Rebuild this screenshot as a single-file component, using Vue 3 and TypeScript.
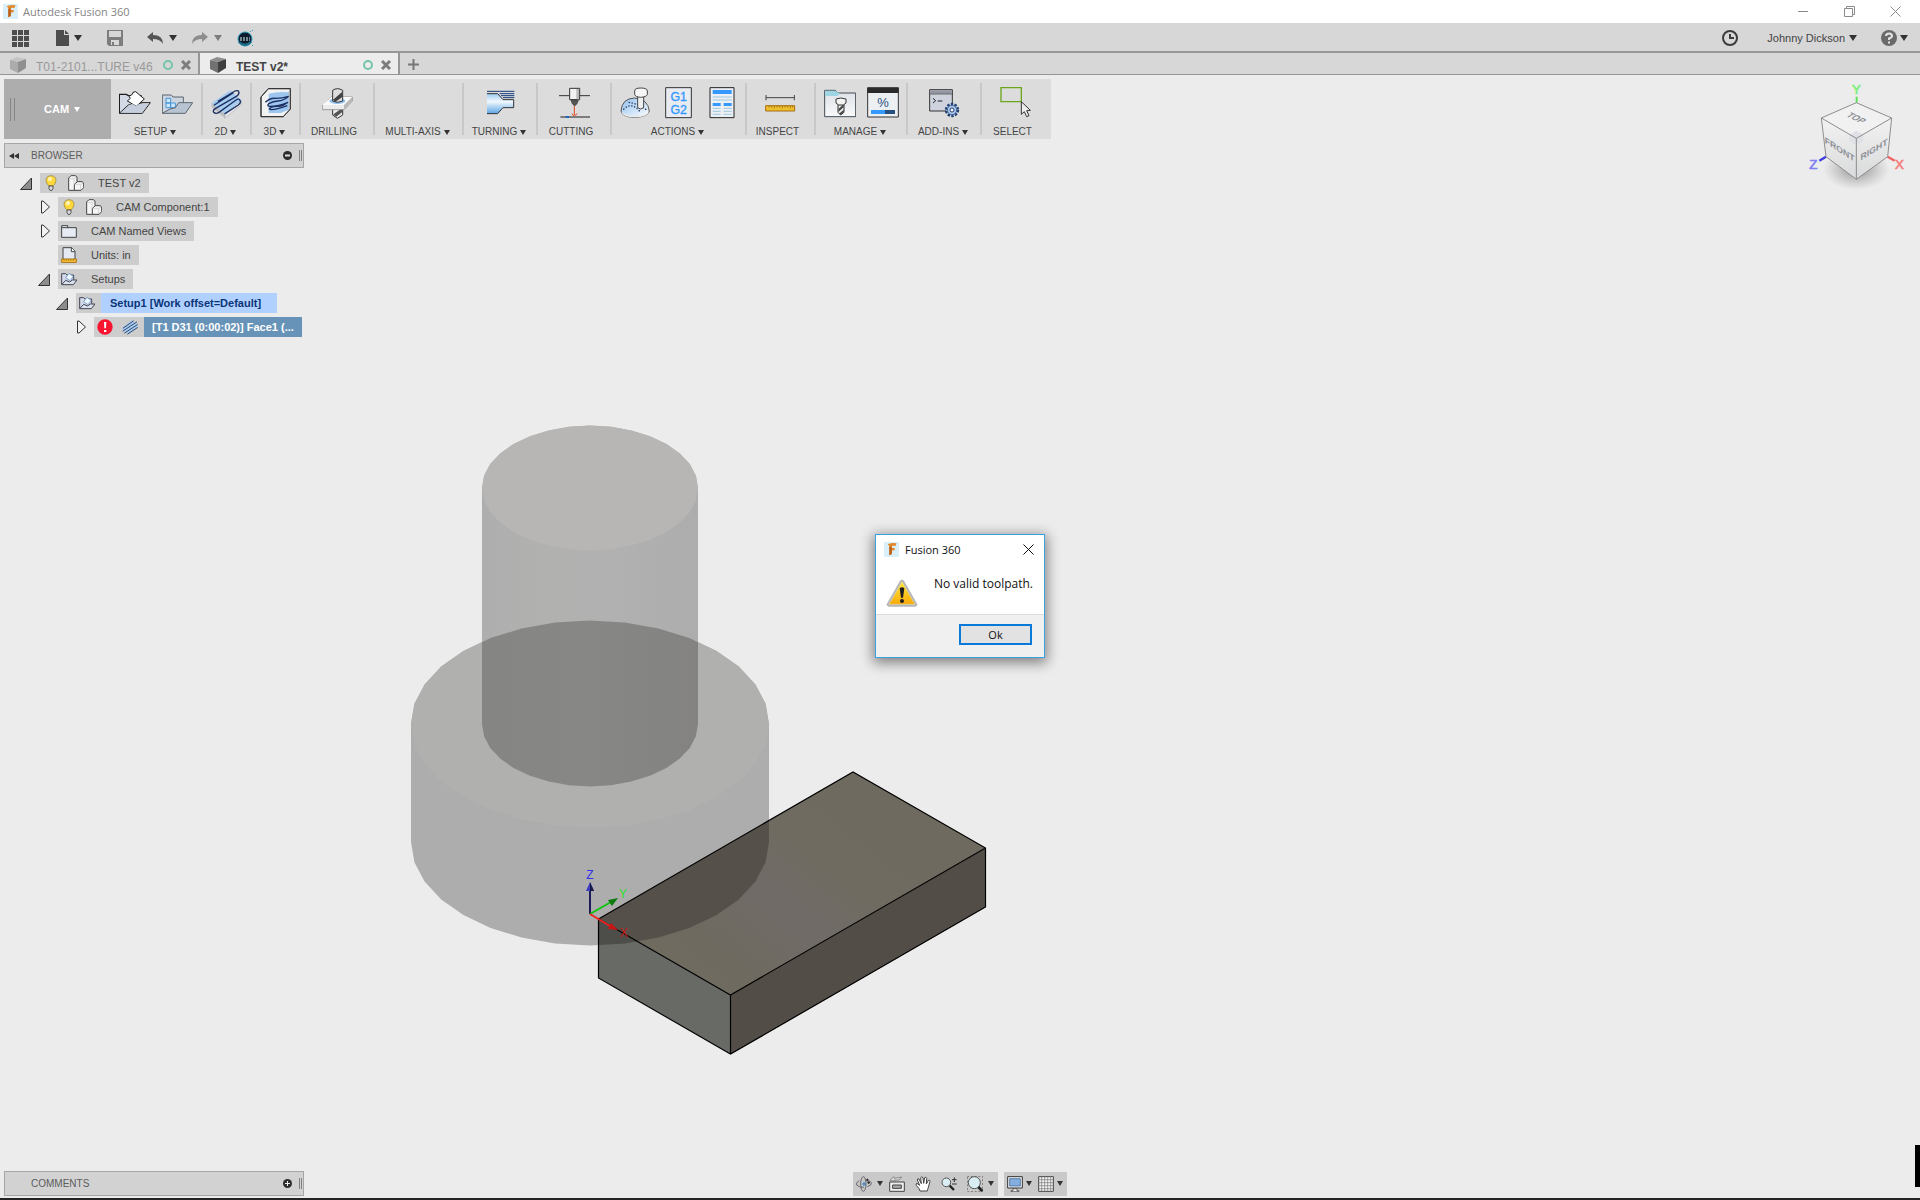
<script setup lang="ts">
interface RibbonGroup {
  label: string
  width: number
  menu: boolean
  icons: string[]
}

interface TreeRow {
  label: string
  level: number
  toggle: 'open' | 'closed' | 'none'
  icons: string[]
  state?: 'active' | 'selected'
}

/* Ribbon glyphs, drawn on a 96 x 96 grid */
const ribbonIcons: Record<string, string> = {
  setup: `<defs><linearGradient id="flap" x1="0" y1="0" x2="1" y2="0"><stop offset="0" stop-color="#9fabc2"/><stop offset="1" stop-color="#e9eef5"/></linearGradient></defs>
    <path d="M1 78V22H22L28 26H66V50" fill="#d3dae6" stroke="#1c1c1c" stroke-width="4"/>
    <path d="M1 79H70L94 47H72L28 54Z" fill="url(#flap)" stroke="#1c1c1c" stroke-width="3" stroke-linejoin="round"/>
    <path d="M25 42L34 34L30 28L40 22L42 16L50 14L76 36L52 58Z" fill="#fff" stroke="#1c1c1c" stroke-width="3" stroke-linejoin="round"/>
    <path d="M4 77L30 55L40 50L52 58L60 51H88L69 77Z" fill="#c6cede"/>`,
  newFolder: `<path d="M1 78V24H28L33 30H64V50" fill="#ccd4df" stroke="#5c6670" stroke-width="3"/>
    <path d="M12 34H26V48H12ZM12 48H26V62H12ZM26 48H40V62H26Z" fill="#cfe6f8" stroke="#4596d8" stroke-width="3"/>
    <path d="M1 79H70L92 47H50L40 62L24 66Z" fill="#b9c4d2" stroke="#5c6670" stroke-width="3" stroke-linejoin="round"/>`,
  mill2d: `<path d="M2 48L42 80L92 40V52L42 94L2 60Z" fill="#b9bcc1"/>
    <path d="M42 80L92 40V52L42 94Z" fill="#e3e5e8" stroke="#9b9ea3" stroke-width="1"/>
    <path d="M2 48L58 10L92 40L42 80Z" fill="#a6ccf0"/>
    <path d="M22 42L72 12Q82 8 84 16Q84 24 76 28L14 64Q4 70 8 76Q14 82 24 76L74 40Q84 32 88 42Q90 48 82 54L42 80M10 54L66 18" fill="none" stroke="#1c2f63" stroke-width="4" stroke-linecap="round"/>`,
  mill3d: `<path d="M3 30L25 5H91V66L70 89H3Z" fill="#f2f2f2" stroke="#333" stroke-width="3" stroke-linejoin="round"/>
    <path d="M70 89L91 66V5L84 16V70Z" fill="#c4c6c9"/>
    <path d="M26 20Q56 12 86 16V68L62 78H26Z" fill="#9cc6ee"/>
    <path d="M16 46Q30 32 48 34Q66 34 86 28Q70 42 54 42Q40 42 26 50Q20 56 28 58Q56 58 84 46Q66 60 50 58Q30 60 28 66Q36 72 82 56" fill="none" stroke="#1c2f63" stroke-width="4"/>
    <path d="M3 30L25 5H91V66L70 89H3Z" fill="none" stroke="#333" stroke-width="3" stroke-linejoin="round"/>`,
  drilling: `<path d="M32 62V84L46 94L62 84V62Z" fill="#eee" stroke="#333" stroke-width="3"/>
    <path d="M34 82L60 64V76L42 90Z" fill="#555"/>
    <path d="M1 56L28 30H91V42L66 68H1Z" fill="#ececec" stroke="#777" stroke-width="2"/>
    <path d="M1 54L28 30H91L66 54Z" fill="#fafafa"/>
    <path d="M66 54L91 30V42L66 68Z" fill="#b9b9b9"/>
    <ellipse cx="46" cy="42" rx="24" ry="9" fill="#8fc0ee"/>
    <path d="M32 42V10Q46 0 62 10V42Q46 50 32 42Z" fill="#ddd" stroke="#333" stroke-width="3"/>
    <path d="M33 38L61 14V30L40 45Z" fill="#444"/>`,
  turning: `<defs><linearGradient id="turn" x1="0" y1="0" x2="0" y2="1"><stop offset="0" stop-color="#9ccaf2"/><stop offset=".4" stop-color="#f1f8fe"/><stop offset="1" stop-color="#5ba4e4"/></linearGradient></defs>
    <path d="M6 20H38L54 38H86V62H54L38 80H6Z" fill="url(#turn)"/>
    <path d="M6 20H38L54 38H86V62H54L38 80H6" fill="none" stroke="#333" stroke-width="3"/>
    <path d="M6 13H88M44 20H88M48 26H88M54 32H88" stroke="#123a78" stroke-width="3"/>`,
  cutting: `<path d="M0 26H93" stroke="#333" stroke-width="3"/>
    <path d="M32 4H62V38H32Z" fill="#f3f3f3" stroke="#333" stroke-width="3"/><path d="M52 6H60V37H52Z" fill="#bbb"/>
    <path d="M36 39H58L54 50L47 57L40 50Z" fill="#555" stroke="#333" stroke-width="2"/>
    <path d="M46 57V84M38 80L46 87L55 80" fill="none" stroke="#e0441c" stroke-width="3"/>
    <path d="M4 90H93" stroke="#7c7c7c" stroke-width="6"/><path d="M20 90H30" stroke="#1d66b8" stroke-width="6"/>`,
  simulate: `<defs><linearGradient id="dome" x1="0" y1="0" x2="1" y2="1"><stop offset="0" stop-color="#8fc0ee"/><stop offset="1" stop-color="#fff"/></linearGradient></defs>
    <path d="M3 72Q6 34 44 33Q84 36 88 72Q84 90 44 91Q6 90 3 72Z" fill="url(#dome)" stroke="#555" stroke-width="3"/>
    <path d="M4 74Q20 86 46 86Q72 86 87 74Q82 91 45 91Q8 91 4 74Z" fill="#e9eaec"/>
    <path d="M10 68Q34 42 60 74M26 46Q54 50 82 70" fill="none" stroke="#1d2c55" stroke-width="4" stroke-dasharray="4 5"/>
    <path d="M53 22V62Q62 70 71 62V22Z" fill="#eee" stroke="#444" stroke-width="3"/>
    <path d="M44 12Q44 3 62 3Q82 3 82 12V22Q80 30 62 31Q46 30 44 22Z" fill="#f6f6f6" stroke="#444" stroke-width="3"/>`,
  post: `<path d="M8 2H85V92H8Z" fill="#e8ebf0" stroke="#333" stroke-width="3"/>
    <text x="47" y="42" text-anchor="middle" font-size="37" fill="#3399ff" stroke="#3399ff" stroke-width="1" font-family="Liberation Sans, Arial, sans-serif">G1</text>
    <text x="47" y="80" text-anchor="middle" font-size="37" fill="#3399ff" stroke="#3399ff" stroke-width="1" font-family="Liberation Sans, Arial, sans-serif">G2</text>`,
  sheet: `<path d="M12 2H84V92H12Z" fill="#eceff3" stroke="#222" stroke-width="3"/>
    <path d="M20 9H77V21H20Z" fill="#3399ff"/><path d="M20 30H77M20 39H77M20 64H44M20 73H44M20 82H44M53 64H77M53 73H77M53 82H77" stroke="#9cc8dd" stroke-width="3"/>
    <path d="M20 48H44V57H20ZM53 48H77V57H53Z" fill="#3399ff"/>`,
  inspect: `<path d="M3 24V40M88 24V40M3 32H88" stroke="#444" stroke-width="3"/>
    <path d="M2 56H89V72H2Z" fill="#f0c02c" stroke="#a56c12" stroke-width="3"/>
    <path d="M12 57V62M20 57V62M28 57V64M36 57V62M44 57V62M52 57V64M60 57V62M68 57V62M76 57V64M83 57V62" stroke="#8a5a0a" stroke-width="2"/>`,
  toolLibrary: `<defs><linearGradient id="lib" x1="0" y1="0" x2="0" y2="1"><stop offset="0" stop-color="#dde1e6"/><stop offset="1" stop-color="#f8f9fa"/></linearGradient></defs>
    <path d="M2 10H34L42 18H95V89H2Z" fill="url(#lib)" stroke="#444d55" stroke-width="3"/>
    <path d="M3 11H34L48 20L40 27H3Z" fill="#9fd4e2"/>
    <path d="M42 52H60V76L50 84L42 76Z" fill="#eee" stroke="#333" stroke-width="3"/><path d="M43 66L59 52V60L44 74ZM45 80L59 68V74L50 84Z" fill="#444"/>
    <path d="M36 36Q50 30 66 36V48L58 54H44L36 48Z" fill="#f4f4f4" stroke="#333" stroke-width="3"/>`,
  taskManager: `<path d="M2 3H94V90H2Z" fill="#edf0f3" stroke="#333" stroke-width="3"/><path d="M1 1H95V18H1Z" fill="#2b2b2b"/>
    <text x="48" y="61" text-anchor="middle" font-size="39" fill="#27507e" font-family="Liberation Sans, Arial, sans-serif">%</text>
    <path d="M12 69H54V81H12Z" fill="#3399ff"/><path d="M54 69H84V81H54Z" fill="#27507e"/>`,
  addins: `<path d="M2 8H70V72H2Z" fill="#cdd2dd" stroke="#333" stroke-width="3"/><path d="M4 10H68V20H4Z" fill="#9497a3"/><path d="M2 21H70" stroke="#333" stroke-width="2"/>
    <path d="M12 34L20 41L12 48M26 42H40" fill="none" stroke="#222" stroke-width="3"/>
    <circle cx="69" cy="69" r="18" fill="#a9c6ea" stroke="#213f70" stroke-width="7" stroke-dasharray="7 4.3"/>
    <circle cx="69" cy="69" r="14" fill="#a9c6ea" stroke="#213f70" stroke-width="2"/>
    <circle cx="69" cy="69" r="6" fill="#fff" stroke="#213f70" stroke-width="3"/>`,
  select: `<path d="M3 2H64V44H3Z" fill="none" stroke="#6aa61a" stroke-width="4"/>
    <path d="M64 44V82L73 74L80 89L87 86L80 71L91 70Z" fill="#eee" stroke="#333" stroke-width="3"/>`,
}

const ribbon: RibbonGroup[] = [
  { label: 'SETUP', width: 92, menu: true, icons: ['setup', 'newFolder'] },
  { label: '2D', width: 49, menu: true, icons: ['mill2d'] },
  { label: '3D', width: 49, menu: true, icons: ['mill3d'] },
  { label: 'DRILLING', width: 74, menu: false, icons: ['drilling'] },
  { label: 'MULTI-AXIS', width: 89, menu: true, icons: [] },
  { label: 'TURNING', width: 74, menu: true, icons: ['turning'] },
  { label: 'CUTTING', width: 74, menu: false, icons: ['cutting'] },
  { label: 'ACTIONS', width: 135, menu: true, icons: ['simulate', 'post', 'sheet'] },
  { label: 'INSPECT', width: 69, menu: false, icons: ['inspect'] },
  { label: 'MANAGE', width: 92, menu: true, icons: ['toolLibrary', 'taskManager'] },
  { label: 'ADD-INS', width: 74, menu: true, icons: ['addins'] },
  { label: 'SELECT', width: 69, menu: false, icons: ['select'] },
]

/* Browser tree glyphs, drawn on a 48 x 48 grid */
const treeIcons: Record<string, string> = {
  bulb: `<path d="M24 2Q39 3 39 17Q38 25 31 32H17Q10 25 9 17Q9 3 24 2Z" fill="#ffd83d" stroke="#8f7a2a" stroke-width="2"/><path d="M18 7Q25 4 27 12Q25 20 17 19Q13 12 18 7Z" fill="#fff6bd"/><path d="M18 33H30V41L27 46H21L18 41Z" fill="#ddd" stroke="#555" stroke-width="3"/>`,
  component: `<path d="M2 9L9 2H22L27 6V20H42L47 24V38L39 46H2Z" fill="#f6f6f6" stroke="#444" stroke-width="3" stroke-linejoin="round"/><path d="M19 45V28L27 21" fill="none" stroke="#444" stroke-width="3"/><path d="M4 11H18V28M18 11L25 6M20 28H38V44M38 28L45 24" fill="none" stroke="#c3c3c3" stroke-width="2"/>`,
  folder: `<path d="M2 8H20V14H46V43H2Z" fill="#e6ebf4" stroke="#444" stroke-width="3" stroke-linejoin="round"/><path d="M2 14H22" stroke="#444" stroke-width="3"/>`,
  units: `<path d="M6 36V2H32L42 13V36" fill="#e4e9f3" stroke="#444" stroke-width="3"/><path d="M31 2V14H42" fill="#fff" stroke="#444" stroke-width="3"/><path d="M2 36H46V46H2Z" fill="#ffc93b" stroke="#a96e0c" stroke-width="3"/><path d="M9 37V42M16 37V42M23 37V42M30 37V42M37 37V42" stroke="#8a5a0a" stroke-width="2"/>`,
  setupFolder: `<path d="M2 40V8H14L18 12H38V26" fill="#d2dae8" stroke="#445" stroke-width="3"/><path d="M2 41H37L48 27H34L26 33L14 28Z" fill="#dbe3ef" stroke="#445" stroke-width="3" stroke-linejoin="round"/><path d="M14 20L24 7L37 16L27 29Z" fill="#eef6ff" stroke="#4d7db5" stroke-width="2"/>`,
  error: `<circle cx="24" cy="24" r="23" fill="#f9142f"/><path d="M21 9H28L27 28H22ZM21 33H28V39H21Z" fill="#fff"/>`,
  toolpath: `<path d="M1 26L30 4L48 18V24L20 46L1 32Z" fill="#a6ccf0"/><path d="M4 27L34 6M3 36L44 9M8 42L46 17M17 45L46 26" stroke="#33476e" stroke-width="3" stroke-linecap="round"/>`,
}

const tree: TreeRow[] = [
  { label: 'TEST v2', level: 0, toggle: 'open', icons: ['bulb', 'component'] },
  { label: 'CAM Component:1', level: 1, toggle: 'closed', icons: ['bulb', 'component'] },
  { label: 'CAM Named Views', level: 1, toggle: 'closed', icons: ['folder'] },
  { label: 'Units: in', level: 1, toggle: 'none', icons: ['units'] },
  { label: 'Setups', level: 1, toggle: 'open', icons: ['setupFolder'] },
  { label: 'Setup1 [Work offset=Default]', level: 2, toggle: 'open', icons: ['setupFolder'], state: 'active' },
  { label: '[T1 D31 (0:00:02)] Face1 (...', level: 3, toggle: 'closed', icons: ['error', 'toolpath'], state: 'selected' },
]

/* Navigation bar glyphs, drawn on a 48 x 48 grid */
const navIcons: Record<string, string> = {
  orbit: `<ellipse cx="22" cy="24" rx="8" ry="22" fill="none" stroke="#666" stroke-width="3"/><path d="M10 14Q-2 20 2 27Q8 34 24 34M34 32Q48 28 46 20Q44 16 38 14" fill="none" stroke="#666" stroke-width="3"/><path d="M24 18V30M18 24H30" stroke="#2b7bd0" stroke-width="3"/><path d="M30 12H38M34 8V16M34 20H42M38 16V24" stroke="#222" stroke-width="3"/>`,
  look: `<path d="M2 18H46V46H2Z" fill="#eee" stroke="#444" stroke-width="3"/><path d="M11 27H37V37H11Z" fill="#aaa" stroke="#444" stroke-width="3"/><path d="M3 13L14 2L16 7L38 3L30 12H16L18 16Z" fill="#ddd" stroke="#666" stroke-width="2"/>`,
  pan: `<path d="M15 45Q14 38 4 28Q1 23 6 22L14 28L7 12Q8 6 12 9L19 23L17 5Q20 0 24 5L26 22L29 5Q33 1 35 7L34 24L40 13Q45 11 45 16L40 34Q38 40 37 45Z" fill="#fff" stroke="#444" stroke-width="3" stroke-linejoin="round"/>`,
  zoom: `<circle cx="16" cy="19" r="13" fill="#d8eef2" stroke="#555" stroke-width="3"/><path d="M26 29L39 42" stroke="#222" stroke-width="7"/><path d="M33 11H47M40 4V18M33 24H47" stroke="#333" stroke-width="3"/>`,
  fit: `<path d="M1 1H47V47H1Z" fill="none" stroke="#777" stroke-width="3" stroke-dasharray="6 5"/><circle cx="22" cy="20" r="18" fill="#d8eef2" stroke="#555" stroke-width="3"/><path d="M34 33L46 45" stroke="#222" stroke-width="8"/>`,
  display: `<path d="M2 2H46V36H2Z" fill="#f0f0f0" stroke="#333" stroke-width="3"/><path d="M8 8H40V30H8Z" fill="#84aede" stroke="#2e5a92" stroke-width="2"/><path d="M18 38H30V44H36V47H12V44H18Z" fill="#eee" stroke="#333" stroke-width="2"/>`,
  grid: `<path d="M2 2H46V46H2Z" fill="#f0f0f0" stroke="#444" stroke-width="3"/><path d="M11 2V46M20 2V46M29 2V46M38 2V46M2 11H46M2 20H46M2 29H46M2 38H46" stroke="#777" stroke-width="2"/>`,
}

const navBars = [
  [
    { icon: 'orbit', menu: true },
    { icon: 'look', menu: false },
    { icon: 'pan', menu: false },
    { icon: 'zoom', menu: false },
    { icon: 'fit', menu: true },
  ],
  [
    { icon: 'display', menu: true },
    { icon: 'grid', menu: true },
  ],
]

/* Tool model: 32-sided cylinders in isometric projection */
const FACETS = 32
const CX = 590
function ring(cy: number, r: number, from: number, to: number): string {
  const pts: string[] = []
  for (let i = from; i <= to; i++) {
    const a = (i / FACETS) * Math.PI * 2
    pts.push(`${(CX + Math.cos(a) * r).toFixed(1)},${(cy + Math.sin(a) * r * 0.5774).toFixed(1)}`)
  }
  return pts.join(' ')
}
const disc = (cy: number, r: number) => ring(cy, r, 0, FACETS - 1)
const hull = (top: number, bottom: number, r: number) =>
  `${ring(bottom, r, 0, FACETS / 2)} ${ring(top, r, FACETS / 2, FACETS)}`

const shankTop = disc(488, 108)
const shankBody = hull(488, 724, 108)
const cutterTop = disc(724, 179)
const cutterBody = hull(724, 842, 179)
</script>

<template>
  <div class="app">
    <header class="titlebar">
      <svg class="logo" viewBox="0 0 48 48" aria-hidden="true"><rect width="48" height="48" fill="#d9f0fa" /><path d="M14 6Q25 2 40 4L37 13Q29 11 25 14L25 19H35L33 27H25V38L17 42V16Q17 10 12 9Z" fill="#e38a2e" /><path d="M25 14V38L17 42V16Z" fill="#b9601a" /></svg>
      <h1>Autodesk Fusion 360</h1>
      <div class="window-buttons">
        <button type="button" aria-label="Minimize"><svg viewBox="0 0 11 11"><path d="M0 5.500H10" /></svg></button>
        <button type="button" aria-label="Restore"><svg viewBox="0 0 11 11"><path d="M.5 2.500H8.500V10.500H.5ZM2.500 2.500V.5H10.500V8.500H8.500" /></svg></button>
        <button type="button" aria-label="Close"><svg viewBox="0 0 11 11"><path d="M.5 .5L10.500 10.500M10.500 .5L.5 10.500" /></svg></button>
      </div>
    </header>

    <nav class="quickbar">
      <button type="button" class="apps" aria-label="Data panel"><svg width="17" height="17" viewBox="0 0 17 17"><path d="M0 0h5v5H0zM6 0h5v5H6zM12 0h5v5h-5zM0 6h5v5H0zM6 6h5v5H6zM12 6h5v5h-5zM0 12h5v5H0zM6 12h5v5H6zM12 12h5v5h-5z" fill="#4d4d4d" /></svg></button>
      <button type="button" class="file" aria-label="File"><svg width="13" height="16" viewBox="0 0 13 16"><path d="M0 0H8V5H13V16H0ZM9 0L13 4H9Z" fill="#4d4d4d" /></svg><i class="caret"></i></button>
      <button type="button" class="save" aria-label="Save"><svg width="16" height="16" viewBox="0 0 16 16"><path d="M0 0H16V16H2L0 14Z" fill="#7d7d7d" /><path d="M2 1H14V7H2ZM4 10H12V15H4Z" fill="#d7d7d7" /><path d="M5 12H7V15H5Z" fill="#7d7d7d" /></svg></button>
      <button type="button" class="undo" aria-label="Undo"><svg width="16" height="12" viewBox="0 0 16 12"><path d="M0 5L6 0V3Q16 3 16 12Q13 7 6 7V10Z" fill="#555" /></svg><i class="caret"></i></button>
      <button type="button" class="redo" aria-label="Redo"><svg width="16" height="12" viewBox="0 0 16 12"><path d="M16 5L10 0V3Q0 3 0 12Q3 7 10 7V10Z" fill="#8d8d8d" /></svg><i class="caret"></i></button>
      <button type="button" class="extension" aria-label="Extension"><svg width="17" height="17" viewBox="0 0 17 17"><circle cx="8" cy="9" r="7" fill="#0d1c2c" stroke="#2c9fc0" /><path d="M2 12Q8 17 14 12" fill="none" stroke="#1d6a86" stroke-width="2" /><path d="M3 8H13M3 10H13" stroke="#dfeef5" stroke-width="1" stroke-dasharray="2 1" /><path d="M13 1h1v1h-1zM15 0h1v1h-1zM15 15h1v1h-1z" fill="#2c9fc0" /></svg></button>
      <span class="spacer"></span>
      <button type="button" class="clock" aria-label="Job status"><svg width="16" height="16" viewBox="0 0 16 16"><circle cx="8" cy="8" r="7" fill="none" stroke="#3c3c3c" stroke-width="2" /><path d="M8 4V8H12" fill="none" stroke="#3c3c3c" stroke-width="2" /></svg></button>
      <button type="button" class="user">Johnny Dickson<i class="caret"></i></button>
      <button type="button" class="help" aria-label="Help"><svg width="16" height="16" viewBox="0 0 16 16"><circle cx="8" cy="8" r="8" fill="#6a6a6a" /><path d="M5 6Q5 3.500 8 3.500Q11 3.500 11 6Q11 7.500 8 8.500V10M8 11.500V13.500" fill="none" stroke="#e4e4e4" stroke-width="2" /></svg><i class="caret"></i></button>
    </nav>

    <div class="tabs">
      <div class="tab muted">
        <svg class="cube" viewBox="0 0 16 16"><path d="M0 3L7 0L16 2L8 5Z" fill="#c4c4c4" /><path d="M0 3L8 5V16L0 12Z" fill="#ababab" /><path d="M8 5L16 2V11L8 16Z" fill="#8f8f8f" /></svg>
        <span class="tab-name">T01-2101...TURE v46</span>
        <i class="status"></i>
        <button type="button" aria-label="Close tab"><svg viewBox="0 0 10 10"><path d="M1 1L9 9M9 1L1 9" /></svg></button>
      </div>
      <div class="tab current">
        <svg class="cube" viewBox="0 0 16 16"><path d="M0 3L7 0L16 2L8 5Z" fill="#8e8e8e" /><path d="M0 3L8 5V16L0 12Z" fill="#717171" /><path d="M8 5L16 2V11L8 16Z" fill="#3f3f3f" /></svg>
        <span class="tab-name">TEST v2*</span>
        <i class="status"></i>
        <button type="button" aria-label="Close tab"><svg viewBox="0 0 10 10"><path d="M1 1L9 9M9 1L1 9" /></svg></button>
      </div>
      <button type="button" class="new-tab" aria-label="New tab"><svg width="11" height="11" viewBox="0 0 11 11"><path d="M5.500 0V11M0 5.500H11" stroke="#777" stroke-width="2" /></svg></button>
    </div>

    <main class="workspace">
      <svg class="scene" viewBox="400 420 600 650" aria-label="Tool and stock">
        <defs>
          <clipPath id="shank"><polygon :points="shankBody" /></clipPath>
          <clipPath id="cutter"><polygon :points="cutterBody" /></clipPath>
          <linearGradient id="side"><stop offset="0" stop-color="#aeaeae" /><stop offset=".3" stop-color="#b1b1b0" /><stop offset=".6" stop-color="#b1b1b1" /><stop offset="1" stop-color="#adadad" /></linearGradient>
          <linearGradient id="inner"><stop offset="0" stop-color="#848482" /><stop offset=".5" stop-color="#878785" /><stop offset="1" stop-color="#81807e" /></linearGradient>
          <linearGradient id="stock" gradientUnits="userSpaceOnUse" x1="665" y1="957" x2="825" y2="757"><stop offset="0" stop-color="#6f6b5f" /><stop offset=".2" stop-color="#6f6a61" /><stop offset=".45" stop-color="#706b67" /><stop offset=".7" stop-color="#6f6b60" /><stop offset="1" stop-color="#6e6a5f" /></linearGradient>
        </defs>
        <polygon :points="cutterBody" fill="#adadad" />
        <polygon :points="cutterTop" fill="#b0b0ae" />
        <polygon :points="shankBody" fill="url(#side)" />
        <polygon :points="shankTop" fill="#b7b6b5" />
        <g clip-path="url(#shank)"><polygon :points="cutterTop" fill="url(#inner)" /></g>
        <polygon points="599,919 853,772 986,848 731,995" fill="url(#stock)" />
        <polygon points="599,919 731,995 731,1054 599,978" fill="#686a66" />
        <polygon points="731,995 986,848 986,907 731,1054" fill="#524d47" />
        <g clip-path="url(#cutter)">
          <polygon points="599,919 853,772 986,848 731,995" fill="#55514a" />
          <polygon points="599,919 731,995 731,1054 599,978" fill="#4d4e4a" />
        </g>
        <path d="M598.500 919L853 772L985.500 848V907L730.500 1054L598.500 978ZM598.500 919L730.500 995L985.500 848M730.500 995V1054" fill="none" stroke="#000" stroke-width="1.200" />
        <path d="M590 914V888" stroke="#1d1d5c" stroke-width="2" /><path d="M586 891L590 882L594 891Z" fill="#3a3ac4" /><path d="M590 882L594 891H590Z" fill="#191946" />
        <path d="M590 914L611 902" stroke="#0cc40c" stroke-width="2" /><path d="M618 898L608 900L612 906Z" fill="#0c7a0c" />
        <path d="M590 914L610 926" stroke="#e22" stroke-width="2" /><path d="M618 930L611 923L608 929Z" fill="#c81414" />
        <text x="590" y="879" fill="#3030e8">Z</text>
        <text x="623" y="898" fill="#2be02b">Y</text>
        <text x="624" y="937" fill="#c41616">X</text>
      </svg>

      <svg class="viewcube" viewBox="360 240 360 336" aria-label="View cube">
        <defs>
          <radialGradient id="cubeShadow"><stop offset="0" stop-color="#777" stop-opacity=".8" /><stop offset="1" stop-color="#999" stop-opacity="0" /></radialGradient>
          <linearGradient id="cubeFace" x1="0" y1="0" x2="0" y2="1"><stop offset="0" stop-color="#f2f2f2" /><stop offset="1" stop-color="#d9dadb" /></linearGradient>
        </defs>
        <ellipse cx="529" cy="508" rx="100" ry="62" fill="url(#cubeShadow)" />
        <path d="M530 290V308" stroke="#5be35b" stroke-width="6" />
        <path d="M438 470L418 482" stroke="#3c3ce0" stroke-width="7" /><path d="M623 470L644 482" stroke="#f06060" stroke-width="7" />
        <path d="M529 308L635 354L529 415L424 354Z" fill="#f1f1f1" />
        <path d="M424 354L529 415V538L438 470Z" fill="url(#cubeFace)" /><path d="M635 354L529 415V538L623 470Z" fill="url(#cubeFace)" />
        <path d="M508 404L529 392L550 404V424L529 436L508 424Z" fill="#dfe1e6" />
        <path d="M529 308L635 354L623 470L529 538L438 470L424 354ZM424 354L529 415L635 354M529 415V538" fill="none" stroke="#8d8d8d" stroke-width="3" />
        <g class="faces">
          <text transform="translate(530 353) rotate(26) skewX(-30)" x="0" y="10">TOP</text>
          <text transform="translate(479 447) skewY(33)" x="0" y="10">FRONT</text>
          <text transform="translate(582 447) skewY(-31)" x="0" y="10">RIGHT</text>
        </g>
        <g font-size="40" stroke-width="2">
          <text x="529" y="281" fill="#7df07d" stroke="#7df07d">Y</text>
          <text x="400" y="506" fill="#8080f4" stroke="#8080f4">Z</text>
          <text x="658" y="506" fill="#f68080" stroke="#f68080">X</text>
        </g>
      </svg>

      <div class="ribbon">
        <button type="button" class="mode"><i class="grip"></i><span>CAM</span><i class="caret"></i></button>
        <section v-for="group in ribbon" :key="group.label" class="group" :style="{ width: group.width + 'px' }">
          <div class="group-icons">
            <button v-for="icon in group.icons" :key="icon" type="button" :aria-label="icon">
              <svg viewBox="0 0 96 96" v-html="ribbonIcons[icon]"></svg>
            </button>
          </div>
          <button type="button" :class="['group-label', { menu: group.menu }]">{{ group.label }}<span class="slot"><i v-if="group.menu" class="caret"></i></span></button>
        </section>
      </div>

      <section class="panel">
        <svg class="rewind" width="10" height="6" viewBox="0 0 10 6"><path d="M5 0V6L0 3ZM10 0V6L5 3Z" fill="#333" /></svg>
        <h2>BROWSER</h2>
        <button type="button" aria-label="Collapse"><svg width="9" height="9" viewBox="0 0 9 9"><circle cx="4.500" cy="4.500" r="4.500" fill="#2c2c2c" /><path d="M2 4.500H7" stroke="#ddd" stroke-width="2" /></svg></button>
        <i class="handle"></i>
      </section>

      <ul class="tree">
        <li v-for="row in tree" :key="row.label" :class="['row', 'level' + row.level, row.state]">
          <button v-if="row.toggle !== 'none'" type="button" :class="['toggle', row.toggle]" :aria-label="row.label">
            <svg v-if="row.toggle === 'open'" width="12" height="13" viewBox="0 0 12 13"><path d="M11.500 1V12.500H.5Z" fill="#8c8c8c" stroke="#333" /></svg>
            <svg v-else width="12" height="14" viewBox="0 0 12 14"><path d="M1.500 1H3L9.500 7L3 13H1.500Z" fill="#f2f2f2" stroke="#333" /></svg>
          </button>
          <span v-else class="toggle"></span>
          <span class="chip">
            <span v-for="icon in row.icons" :key="icon" class="chip-icon"><svg viewBox="0 0 48 48" v-html="treeIcons[icon]"></svg></span>
            <span class="chip-label">{{ row.label }}</span>
          </span>
        </li>
      </ul>

      <footer class="bottom">
        <section class="panel">
          <h2 class="indented">COMMENTS</h2>
          <button type="button" aria-label="Expand"><svg width="9" height="9" viewBox="0 0 9 9"><circle cx="4.500" cy="4.500" r="4.500" fill="#2c2c2c" /><path d="M2 4.500H7M4.500 2V7" stroke="#eee" stroke-width="1" /></svg></button>
          <i class="handle"></i>
        </section>
        <div class="navbars">
          <div v-for="(bar, i) in navBars" :key="i" class="navbar">
            <button v-for="item in bar" :key="item.icon" type="button" :class="{ plain: !item.menu }" :aria-label="item.icon">
              <svg viewBox="0 0 48 48" v-html="navIcons[item.icon]"></svg><i v-if="item.menu" class="caret"></i>
            </button>
          </div>
        </div>
      </footer>
      <i class="edge"></i>
    </main>

    <div class="overlay">
      <div class="dialog" role="alertdialog" aria-labelledby="dialog-title">
        <div class="dialog-head">
          <svg class="logo" viewBox="0 0 48 48" aria-hidden="true"><rect width="48" height="48" fill="#d9f0fa" /><path d="M14 6Q25 2 40 4L37 13Q29 11 25 14L25 19H35L33 27H25V38L17 42V16Q17 10 12 9Z" fill="#e38a2e" /><path d="M25 14V38L17 42V16Z" fill="#b9601a" /></svg>
          <h2 id="dialog-title">Fusion 360</h2>
          <button type="button" aria-label="Close"><svg width="11" height="11" viewBox="0 0 11 11"><path d="M.5 .5L10.500 10.500M10.500 .5L.5 10.500" stroke="#111" /></svg></button>
        </div>
        <div class="dialog-body">
          <svg width="32" height="28" viewBox="0 0 96 84"><defs><linearGradient id="warn" x1="0" y1="0" x2="0" y2="1"><stop offset="0" stop-color="#ffe93a" /><stop offset="1" stop-color="#f7a90a" /></linearGradient></defs><path d="M42 5Q48 0 54 5L94 76Q94 82 88 83H8Q2 82 2 76Z" fill="#b4b6ba" /><path d="M48 8L87 76H9Z" fill="url(#warn)" stroke="#e8d9a0" stroke-width="2" /><path d="M41 28Q48 22 55 28L51 56H45Z" fill="#1d1d1d" /><circle cx="48" cy="66" r="6" fill="#1d1d1d" /></svg>
          <p>No valid toolpath.</p>
        </div>
        <div class="dialog-foot"><button type="button">Ok</button></div>
      </div>
    </div>
  </div>
</template>

<style>
body {
  margin: 0;
  background: #ececec;
}
</style>

<style scoped>
.app {
  position: relative;
  display: flex;
  flex-direction: column;
  min-height: 100vh;
  overflow: hidden;
  color: #444;
  background: #ececec;
  font: 11px/14px "Liberation Sans", Arial, sans-serif;
}
.app *,
.app :deep(*) {
  box-sizing: border-box;
}
button {
  display: flex;
  align-items: center;
  margin: 0;
  padding: 0;
  border: 0;
  background: none;
  color: inherit;
  font: inherit;
}
svg {
  display: block;
  flex: none;
}
h1,
h2,
p {
  margin: 0;
  font-weight: normal;
}
.caret {
  flex: none;
  border: solid transparent;
  border-width: 5px 3px 0;
  border-top-color: #333;
}

.titlebar {
  display: flex;
  align-items: center;
  height: 23px;
  padding-left: 3px;
  background: #fff;
}
.logo {
  width: 15px;
  height: 15px;
}
.titlebar h1 {
  flex: 1;
  margin-left: 5px;
  color: #858585;
  font: 11px/16px "Open Sans", "Segoe UI", sans-serif;
}
.window-buttons {
  display: flex;
  padding-right: 2px;
}
.window-buttons button {
  justify-content: center;
  width: 46px;
  height: 20px;
}
.window-buttons svg {
  width: 11px;
  height: 11px;
  fill: none;
  stroke: #8a8a8a;
}

.quickbar {
  display: flex;
  align-items: center;
  height: 30px;
  padding: 2px 12px 0 12px;
  border-bottom: 2px solid #969696;
  background: #d7d7d7;
}
.quickbar .caret {
  border-width: 6px 4px 0;
}
.file { margin-left: 27px; gap: 5px; }
.save { margin-left: 25px; }
.undo { margin-left: 24px; gap: 6px; }
.redo { margin-left: 15px; gap: 6px; }
.quickbar .redo .caret { border-top-color: #7d7d7d; }
.extension { margin-left: 15px; }
.spacer { flex: 1; }
.user { margin-left: 29px; gap: 4px; }
.help { margin-left: 24px; gap: 3px; }

.tabs {
  display: flex;
  height: 22px;
  border-bottom: 1px solid #969696;
  background: #d7d7d7;
}
.tab {
  display: flex;
  align-items: center;
  width: 200px;
  padding: 2px 7px 0 10px;
  border-right: 2px solid #969696;
  font-size: 12px;
}
.tab.muted { color: #999; }
.tab.current {
  background: #ececec;
  font-weight: bold;
}
.cube {
  width: 16px;
  height: 16px;
}
.tab-name {
  flex: 1;
  margin-left: 10px;
  padding-top: 4px;
}
.status {
  width: 10px;
  height: 10px;
  margin-right: 8px;
  border: 2px solid #74c4ab;
  border-radius: 50%;
}
.tab button svg {
  width: 10px;
  height: 10px;
  fill: none;
  stroke: #7c7c7c;
  stroke-width: 3;
}
.new-tab {
  margin-left: 8px;
  padding-top: 2px;
}

.workspace {
  position: relative;
  display: flex;
  flex: 1;
  flex-direction: column;
  align-items: flex-start;
  padding: 4px 0 0 4px;
  border-bottom: 2px solid #242426;
}
.scene {
  position: absolute;
  left: 400px;
  top: 345px;
  width: 600px;
  height: 650px;
}
.scene text {
  font-size: 12px;
  text-anchor: middle;
}
.viewcube {
  position: absolute;
  top: 5px;
  right: 0;
  width: 120px;
  height: 112px;
}
.viewcube text {
  text-anchor: middle;
}
.faces {
  fill: #8c9096;
  font-size: 26px;
  font-weight: bold;
}
.edge {
  position: absolute;
  right: 0;
  bottom: 11px;
  width: 5px;
  height: 42px;
  background: #000;
}

.ribbon {
  position: relative;
  display: flex;
  height: 60px;
  background: #dcdcdc;
}
.mode {
  width: 107px;
  background: #adadad;
  color: #fff;
  font-weight: bold;
}
.mode span { margin-left: 29px; }
.mode .caret {
  margin-left: 5px;
  border-top-color: #fff;
}
.grip {
  width: 5px;
  height: 23px;
  margin-left: 6px;
  border: solid #858585;
  border-width: 0 1px;
}
.group {
  display: flex;
  flex-direction: column;
  align-items: center;
  background: linear-gradient(#c8c8c8, #c8c8c8) right center / 2px 52px no-repeat;
}
.group:last-child { background: none; }
.group-icons {
  display: flex;
  gap: 11px;
  height: 40px;
  padding: 8px 1px 0 0;
}
.group-icons svg {
  width: 32px;
  height: 32px;
}
.group-label {
  margin-top: 7px;
  font-size: 10px;
  line-height: 12px;
}
.slot { width: 8px; }
.menu .slot {
  width: 13px;
  padding-left: 3px;
}
.slot .caret { display: block; width: 6px; }

.panel {
  position: relative;
  display: flex;
  align-items: center;
  width: 300px;
  height: 25px;
  margin-top: 4px;
  padding: 0 1px 0 4px;
  border: 1px solid #a6a6a6;
  background: #d2d2d2;
}
.panel h2 {
  flex: 1;
  margin-left: 12px;
  color: #5c5c5c;
  font-size: 10px;
}
.panel h2.indented { margin-left: 22px; }
.handle {
  width: 3px;
  height: 11px;
  margin-left: 7px;
  border: solid #808080;
  border-width: 0 1px;
}

.tree {
  position: relative;
  display: flex;
  flex-direction: column;
  gap: 4px;
  margin: 5px 0 0;
  padding: 0;
  list-style: none;
}
.row {
  display: flex;
  align-items: center;
  height: 20px;
  padding-left: 16px;
}
.level1 { padding-left: 34px; }
.level2 { padding-left: 52px; }
.level3 { padding-left: 70px; }
.toggle { width: 20px; }
.toggle.closed { padding-left: 2px; }
.chip {
  display: flex;
  align-items: center;
  height: 20px;
  background: #cdcdcd;
}
.chip-icon {
  display: flex;
  width: 25px;
  padding-left: 3px;
}
.chip-icon svg {
  width: 16px;
  height: 16px;
}
.chip-label {
  padding: 0 8px;
  line-height: 20px;
  white-space: nowrap;
}
.active .chip-label {
  padding: 0 16px 0 9px;
  background: #b0d1ff;
  color: #0b3578;
  font-weight: bold;
}
.selected .chip-label {
  background: #6793b8;
  color: #fff;
  font-weight: bold;
}

.bottom {
  position: relative;
  display: grid;
  grid-template-columns: 1fr auto 1fr;
  align-items: center;
  align-self: stretch;
  margin-top: auto;
  margin-left: -4px;
  padding-bottom: 2px;
}
.bottom .panel {
  margin: 0 0 0 4px;
}
.navbars {
  display: flex;
  gap: 6px;
}
.navbar {
  display: flex;
  align-items: center;
  gap: 6px;
  height: 24px;
  padding: 0 4px 0 3px;
  background: #c9c9c9;
}
.navbar button { gap: 5px; }
.navbar:last-child button { gap: 3px; }
.navbar .plain { padding-right: 4px; }
.navbar svg {
  width: 16px;
  height: 16px;
}

.overlay {
  position: absolute;
  inset: 0;
  display: flex;
  align-items: center;
  justify-content: center;
  padding-bottom: 8px;
}
.dialog {
  width: 170px;
  border: 1px solid #3aa0e0;
  background: #fff;
  box-shadow: 0 3px 12px 2px rgba(0, 0, 0, 0.45);
  color: #111;
  font: 12px/16px "Open Sans", "Segoe UI", sans-serif;
}
.dialog-head {
  display: flex;
  align-items: center;
  height: 30px;
  padding: 0 10px 1px 8px;
}
.dialog-head h2 {
  flex: 1;
  margin-left: 6px;
  font-size: 11px;
}
.dialog-body {
  display: flex;
  align-items: flex-start;
  justify-content: space-between;
  height: 49px;
  padding: 11px 11px 0 10px;
}
.dialog-body svg { margin-top: 3px; }
.dialog-foot {
  display: flex;
  justify-content: flex-end;
  height: 43px;
  padding: 9px 12px 0;
  border-top: 1px solid #dcdcdc;
  background: #f0f0f0;
}
.dialog-foot button {
  justify-content: center;
  width: 73px;
  height: 21px;
  border: 2px solid #0a7ad8;
  background: #e2e2e2;
  font-size: 11px;
}
</style>
